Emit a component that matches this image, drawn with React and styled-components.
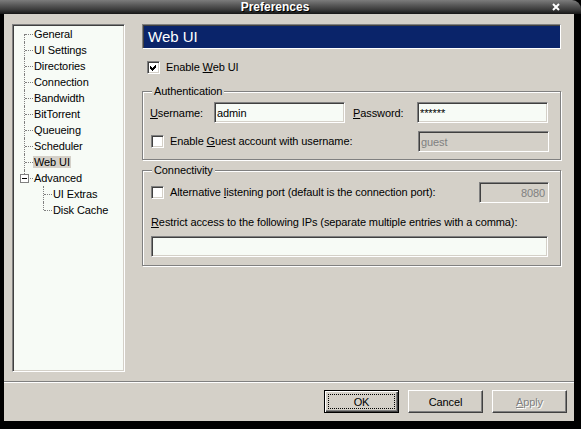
import React from "react";
import styled, { createGlobalStyle, css } from "styled-components";

const GlobalStyle = createGlobalStyle`
  html, body {
    margin: 0;
    padding: 0;
    background: #000;
    overflow: hidden;
  }
  body {
    font-family: "Liberation Sans", Arial, sans-serif;
    font-size: 11px;
    letter-spacing: -0.1px;
    color: #000;
  }
`;

const treeItems = [
  { label: "General" },
  { label: "UI Settings" },
  { label: "Directories" },
  { label: "Connection" },
  { label: "Bandwidth" },
  { label: "BitTorrent" },
  { label: "Queueing" },
  { label: "Scheduler" },
  { label: "Web UI", selected: true },
  { label: "Advanced", expander: true, last: true },
  { label: "UI Extras", level: 1 },
  { label: "Disk Cache", level: 1, last: true },
];

function Checkbox({ checked }) {
  return (
    <CheckBox>
      {checked && (
        <svg width="7" height="7" viewBox="0 0 7 7" shapeRendering="crispEdges">
          <path d="M0 2 L2 4 L6 0 L6 3 L2 7 L0 5 Z" fill="#000" />
        </svg>
      )}
    </CheckBox>
  );
}

function TreeView() {
  return (
    <Tree>
      {treeItems.map((item, i) => (
        <TreeRow key={item.label}>
          {item.level === 1 && <Indent />}
          <Connector $first={i === 0} $last={item.last}>
            {item.expander && (
              <Expander>
                <span />
              </Expander>
            )}
          </Connector>
          <TreeLabel $selected={item.selected}>{item.label}</TreeLabel>
        </TreeRow>
      ))}
    </Tree>
  );
}

export default function App() {
  return (
    <>
      <GlobalStyle />
      <Frame>
        <TitleBar>
          <Title>Preferences</Title>
          <CloseButton>
            <svg width="8" height="8" viewBox="0 0 8 8">
              <path d="M1 1 L7 7 M7 1 L1 7" stroke="#fff" strokeWidth="2" />
            </svg>
          </CloseButton>
        </TitleBar>

        <Body>
          <Main>
            <TreeView />

            <Page>
              <PageHeader>Web UI</PageHeader>

              <CheckRow $offset={5}>
                <Checkbox checked />
                <span>
                  Enable <u>W</u>eb UI
                </span>
              </CheckRow>

              <Group $top={17}>
                <Legend>Authentication</Legend>
                <FieldRow>
                  <FieldLabel>
                    <u>U</u>sername:
                  </FieldLabel>
                  <TextField $width={131} value="admin" readOnly />
                  <FieldLabel $gap={8}>
                    <u>P</u>assword:
                  </FieldLabel>
                  <TextField $width={131} value="******" readOnly />
                </FieldRow>
                <FieldRow $top={8}>
                  <CheckRow $offset={1}>
                    <Checkbox />
                    <span>
                      Enable <u>G</u>uest account with username:
                    </span>
                  </CheckRow>
                  <Spacer />
                  <TextField $width={131} value="guest" disabled readOnly />
                </FieldRow>
              </Group>

              <Group $top={10} $bottom={8}>
                <Legend>Connectivity</Legend>
                <FieldRow $pad={11}>
                  <CheckRow $offset={1}>
                    <Checkbox />
                    <span>
                      Alternative <u>l</u>istening port (default is the connection port):
                    </span>
                  </CheckRow>
                  <Spacer />
                  <TextField $width={70} $align="right" value="8080" disabled readOnly />
                </FieldRow>
                <PlainLabel>
                  <u>R</u>estrict access to the following IPs (separate multiple entries with a comma):
                </PlainLabel>
                <TextField $width={397} $offset={1} value="" readOnly />
              </Group>
            </Page>
          </Main>

          <Separator />

          <ButtonBar>
            <Button $default>
              <FocusRing>OK</FocusRing>
            </Button>
            <Button>Cancel</Button>
            <Button disabled>
              <u>A</u>pply
            </Button>
          </ButtonBar>
        </Body>
      </Frame>
    </>
  );
}

const sunken = css`
  border: 1px solid;
  border-color: #808080 #ffffff #ffffff #808080;
  box-shadow: inset 1px 1px 0 #404040, inset -1px -1px 0 #d4d0c8;
`;

const Frame = styled.div`
  width: 581px;
  height: 429px;
  background: #000;
  display: flex;
  flex-direction: column;
`;

const TitleBar = styled.div`
  height: 14px;
  flex: none;
  display: flex;
  align-items: center;
  background: linear-gradient(#7c7c7c 0%, #5a5a5a 35%, #3a3a3a 70%, #151515 100%);
  border-top-right-radius: 9px;
`;

const Title = styled.div`
  flex: 1;
  text-align: center;
  color: #fff;
  font-weight: bold;
  font-size: 12px;
  letter-spacing: 0;
  line-height: 14px;
  text-shadow: 1px 1px 0 #000;
`;

const CloseButton = styled.div`
  width: 11px;
  height: 14px;
  margin-right: 20px;
  display: flex;
  align-items: center;
  justify-content: center;
`;

const Body = styled.div`
  flex: none;
  height: 407px;
  margin: 0 7px 0 4px;
  background: #d4d0c8;
  display: flex;
  flex-direction: column;
`;

const Main = styled.div`
  flex: 1;
  min-height: 0;
  display: flex;
  gap: 17px;
  padding: 10px 13px 0 8px;
`;

const Tree = styled.div`
  width: 113px;
  flex: none;
  box-sizing: border-box;
  ${sunken};
  background: #f7fbf6;
  padding: 1px;
`;

const TreeRow = styled.div`
  display: flex;
  align-items: center;
  height: 16px;
`;

const Indent = styled.span`
  width: 19px;
  flex: none;
`;

const Connector = styled.span`
  position: relative;
  flex: none;
  width: 19px;
  height: 16px;

  &::before {
    content: "";
    position: absolute;
    left: 10px;
    top: ${({ $first }) => ($first ? 8 : 0)}px;
    bottom: ${({ $last }) => ($last ? 8 : 0)}px;
    border-left: 1px dotted #808080;
  }

  &::after {
    content: "";
    position: absolute;
    left: 11px;
    top: 8px;
    width: 8px;
    border-top: 1px dotted #808080;
  }
`;

const Expander = styled.span`
  position: absolute;
  z-index: 1;
  left: 6px;
  top: 4px;
  width: 9px;
  height: 9px;
  box-sizing: border-box;
  border: 1px solid #808080;
  background: #fff;
  display: flex;
  align-items: center;
  justify-content: center;

  span {
    width: 5px;
    height: 1px;
    background: #000;
  }
`;

const TreeLabel = styled.span`
  padding: 0 1px;
  line-height: 12px;
  white-space: nowrap;
  background: ${({ $selected }) => ($selected ? "#d4d0c8" : "transparent")};
`;

const Page = styled.div`
  flex: 1;
  min-width: 0;
  display: flex;
  flex-direction: column;
  align-items: flex-start;
`;

const PageHeader = styled.div`
  align-self: stretch;
  height: 25px;
  box-sizing: border-box;
  ${sunken};
  box-shadow: inset 1px 1px 0 #404040;
  background: #0a246a;
  color: #fff;
  font-size: 15px;
  letter-spacing: 0;
  line-height: 23px;
  padding-left: 5px;
`;

const CheckRow = styled.label`
  display: flex;
  align-items: center;
  gap: 6px;
  margin-left: ${({ $offset }) => $offset || 0}px;
  line-height: 13px;
  white-space: nowrap;

  ${PageHeader} + & {
    margin-top: 12px;
  }
`;

const CheckBox = styled.span`
  width: 13px;
  height: 13px;
  flex: none;
  box-sizing: border-box;
  ${sunken};
  background: #fff;
  display: flex;
  align-items: center;
  justify-content: center;
`;

const Group = styled.div`
  position: relative;
  align-self: stretch;
  margin-top: ${({ $top }) => $top}px;
  border: 1px solid #808080;
  box-shadow: inset 1px 1px 0 #fff, 1px 1px 0 #fff;
  padding: 0 11px ${({ $bottom }) => $bottom || 7}px 7px;
  display: flex;
  flex-direction: column;
  align-items: flex-start;
`;

const Legend = styled.span`
  position: absolute;
  left: 9px;
  top: -7px;
  padding: 0 2px;
  line-height: 13px;
  background: #d4d0c8;
`;

const FieldRow = styled.div`
  align-self: stretch;
  display: flex;
  align-items: center;
  margin-top: ${({ $top, $pad }) => $top ?? $pad ?? 10}px;
`;

const FieldLabel = styled.label`
  width: 64px;
  flex: none;
  margin-left: ${({ $gap }) => $gap || 0}px;
  white-space: nowrap;
`;

const Spacer = styled.span`
  flex: 1;
`;

const TextField = styled.input`
  width: ${({ $width }) => $width}px;
  height: 21px;
  flex: none;
  box-sizing: border-box;
  margin: 0 0 0 ${({ $offset }) => $offset || 0}px;
  ${sunken};
  background: #f7fbf6;
  padding: 0 3px 0 2px;
  font: 11px "Liberation Sans", Arial, sans-serif;
  letter-spacing: -0.1px;
  color: #000;
  text-align: ${({ $align }) => $align || "left"};
  outline: none;

  &:disabled {
    background: #d4d0c8;
    color: #808080;
  }
`;

const PlainLabel = styled.div`
  margin: 13px 0 7px 1px;
  line-height: 13px;
  white-space: nowrap;
`;

const Separator = styled.div`
  flex: none;
  margin-top: 9px;
  height: 0;
  border-top: 1px solid #808080;
  border-bottom: 1px solid #fff;
`;

const ButtonBar = styled.div`
  flex: none;
  display: flex;
  justify-content: flex-end;
  gap: 9px;
  padding: 7px 7px 8px 0;
`;

const Button = styled.button`
  width: 75px;
  height: 23px;
  box-sizing: border-box;
  padding: 0;
  background: #d4d0c8;
  font: 11px "Liberation Sans", Arial, sans-serif;
  letter-spacing: -0.1px;
  color: #000;
  border: 1px solid;
  border-color: #fff #404040 #404040 #fff;
  box-shadow: inset -1px -1px 0 #808080;
  display: flex;
  align-items: center;
  justify-content: center;

  ${({ $default }) =>
    $default &&
    css`
      border: 1px solid #000;
      box-shadow: inset 1px 1px 0 #fff, inset -1px -1px 0 #404040, inset -2px -2px 0 #808080;
      padding: 3px;
    `}

  &:disabled {
    color: #808080;
    text-shadow: 1px 1px 0 #fff;
  }
`;

const FocusRing = styled.span`
  flex: 1;
  align-self: stretch;
  border: 1px dotted #000;
  display: flex;
  align-items: center;
  justify-content: center;
`;
